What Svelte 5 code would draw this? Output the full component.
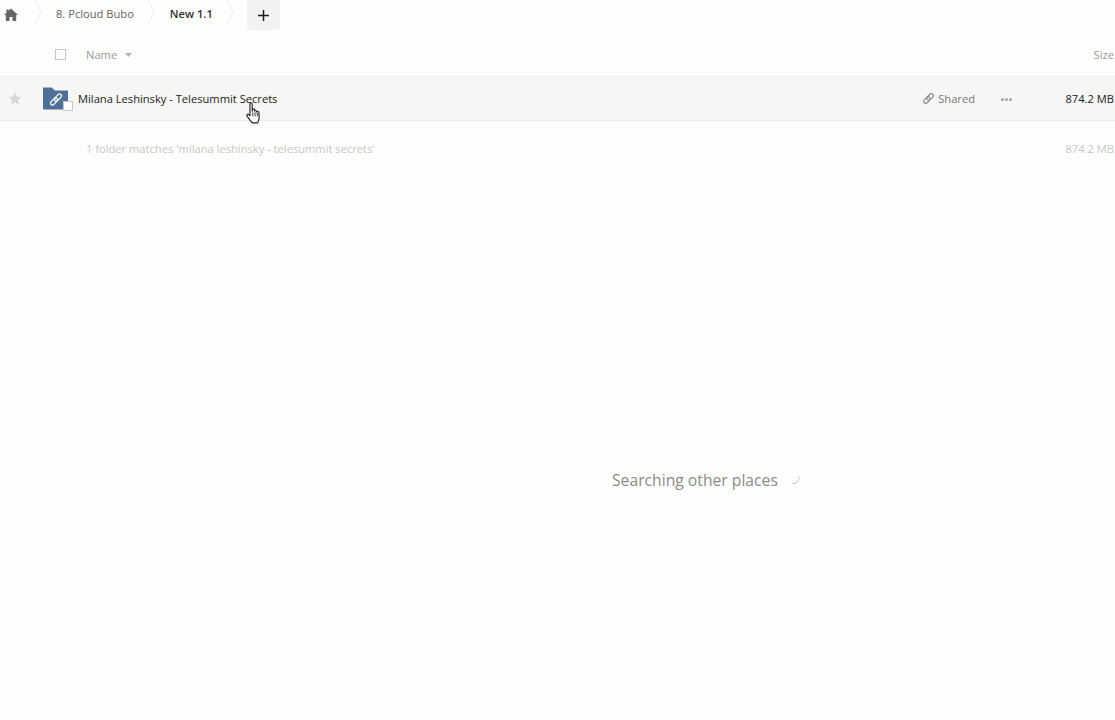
<script>
  const crumbs = [
    { label: '8. Pcloud Bubo', current: false },
    { label: 'New 1.1', current: true }
  ];
</script>

<div class="page">
  <nav class="crumbs">
    <svg class="home" width="14" height="13" viewBox="0 0 14 13"><path d="M7 .5 14 7h-1.800v6H8.500V9H5.500v4H1.800V7H0l2.400-2.300V1.500h2.200v1.200z" fill="#666"/></svg>
    <svg class="chev first" width="7" height="24" viewBox="0 0 7 24"><path d="M.5 0l5.500 12-5.500 12" fill="none" stroke="#ededec"/></svg>
    {#each crumbs as c}
      <span class="crumb" class:current={c.current}>{c.label}</span>
      <svg class="chev" width="7" height="24" viewBox="0 0 7 24"><path d="M.5 0l5.500 12-5.500 12" fill="none" stroke="#ededec"/></svg>
    {/each}
    <div class="plus"><svg width="11" height="11" viewBox="0 0 11 11"><path d="M5.500 0v11M0 5.500h11" stroke="#1d1d1d" stroke-width="1.500"/></svg></div>
  </nav>

  <div class="head">
    <span class="check"></span>
    <span class="name-head">Name</span>
    <svg class="caret" width="7" height="4" viewBox="0 0 7 4"><path d="M0 0h7L3.500 4z" fill="#b5b5b5"/></svg>
    <span class="size-head">Size</span>
  </div>

  <div class="row">
    <svg class="star" width="14" height="13" viewBox="0 0 14 13"><path d="M7 0l1.700 4.700 5 .2-3.900 3.100 1.300 4.800L7 10.100 2.900 12.800 4.200 8 .3 4.900l5-.2z" fill="#d6d6d6"/></svg>
    <div class="folder">
      <svg width="30" height="25" viewBox="0 0 30 25">
        <path d="M0 .5h8.500L12 3.500H25v19H0z" fill="#4f6f99"/>
        <g fill="none" stroke="#f4f6f9" stroke-width="1.300" transform="rotate(-45 13 12.500)">
          <rect x="6" y="10.600" width="8.500" height="3.800" rx="1.900"/>
          <rect x="11.500" y="10.600" width="8.500" height="3.800" rx="1.900"/>
        </g>
        <rect x="20.500" y="14.500" width="9" height="9" fill="#fdfdfc" stroke="#c9c9c9"/>
      </svg>
    </div>
    <span class="fname">Milana Leshinsky - Telesummit Secrets</span>
    <span class="shared">
      <svg width="13" height="13" viewBox="0 0 13 13"><g fill="none" stroke="#8a8a8a" stroke-width="1.200" transform="rotate(-45 6.500 6.500)"><rect x=".5" y="4.500" width="7.500" height="4" rx="2"/><rect x="5" y="4.500" width="7.500" height="4" rx="2"/></g></svg>
      Shared
    </span>
    <span class="dots"><i></i><i></i><i></i></span>
    <span class="size">874.2 MB</span>
  </div>

  <div class="summary">
    <span>1 folder matches 'milana leshinsky - telesummit secrets'</span>
    <span>874.2 MB</span>
  </div>

  <div class="searching">
    <span>Searching other places</span>
    <svg width="9" height="9" viewBox="0 0 9 9"><path d="M8 .5a6 6 0 0 1-6.500 7" fill="none" stroke="#c4c4c4"/></svg>
  </div>

  <svg class="cursor" width="17" height="23" viewBox="0 0 15 20">
    <path d="M3.500 1.500c0-1.300 2-1.300 2 0V8l.3-1.500c.3-1 1.800-.8 1.800.2V8c.2-1 1.900-.9 1.900.2v.6c.3-.9 1.900-.7 1.900.4l.2 4.300c0 2-.8 3.400-1.400 4.800H5.500L1 12.500c-.9-1.100.4-2.500 1.500-1.500l1 1z" fill="#fff" stroke="#222" stroke-width="1" stroke-linejoin="round"/>
    <path d="M6 9v3.500M8 9v3.500M10 9.500v3" stroke="#222" stroke-width=".8"/>
  </svg>
</div>

<style>
  :global(body) { margin: 0; background: #fdfdfc; }
  .page {
    position: relative;
    width: 1115px;
    height: 720px;
    overflow: hidden;
    background: #fdfdfc;
    font-family: "Open Sans", sans-serif;
    font-size: 11.15px;
    color: #222;
  }
  .crumbs { display: flex; align-items: center; height: 30px; padding-left: 4px; }
  .home { margin-right: 17px; margin-top: -2px; }
  .chev { flex: none; margin-top: -6px; }
  .chev.first { margin-right: 14px; }
  .crumb { color: #666; margin-top: -3px; margin-right: 14px; }
  .crumb.current { color: #333; font-weight: 600; margin-left: 15px; }
  .plus {
    width: 33px; height: 30px; margin-left: 13px;
    display: flex; align-items: center; justify-content: center;
    background: #f2f2f1; border-radius: 0 0 3px 3px;
  }
  .head {
    position: relative;
    display: flex; align-items: center;
    border-bottom: 1px solid #f0f0ef;
    padding: 2px 0 0 55px;
    height: 44px;
    color: #999;
  }
  .check { width: 9px; height: 9px; border: 1px solid #c4c4c4; margin-right: 20px; }
  .caret { margin-left: 8px; margin-top: 1px; }
  .size-head { margin-left: auto; margin-right: 1px; }
  .row {
    display: flex; align-items: center;
    height: 43px; background: #f6f6f5;
    border-bottom: 1px solid #ececeb;
  }
  .star { margin-left: 8px; }
  .folder { display: flex; margin-left: 21px; margin-top: 1px; }
  .fname { margin-left: 5px; color: #222; }
  .shared { display: flex; align-items: center; gap: 3px; margin-left: auto; color: #777; }
  .dots { display: flex; gap: 1px; margin-left: 26px; margin-top: 2px; }
  .dots i { width: 3px; height: 3px; border-radius: 50%; background: #a5a5a5; }
  .size { width: 102px; text-align: right; margin-right: 1px; color: #222; }
  .summary {
    display: flex; justify-content: space-between;
    padding: 20px 1px 0 86px;
    color: #c8c8c8;
  }
  .searching {
    position: absolute; left: 612px; top: 469px;
    display: flex; align-items: center; gap: 13px;
    font-size: 15.7px; color: #8b8b8b;
  }
  .cursor { position: absolute; left: 246px; top: 102px; }
</style>
